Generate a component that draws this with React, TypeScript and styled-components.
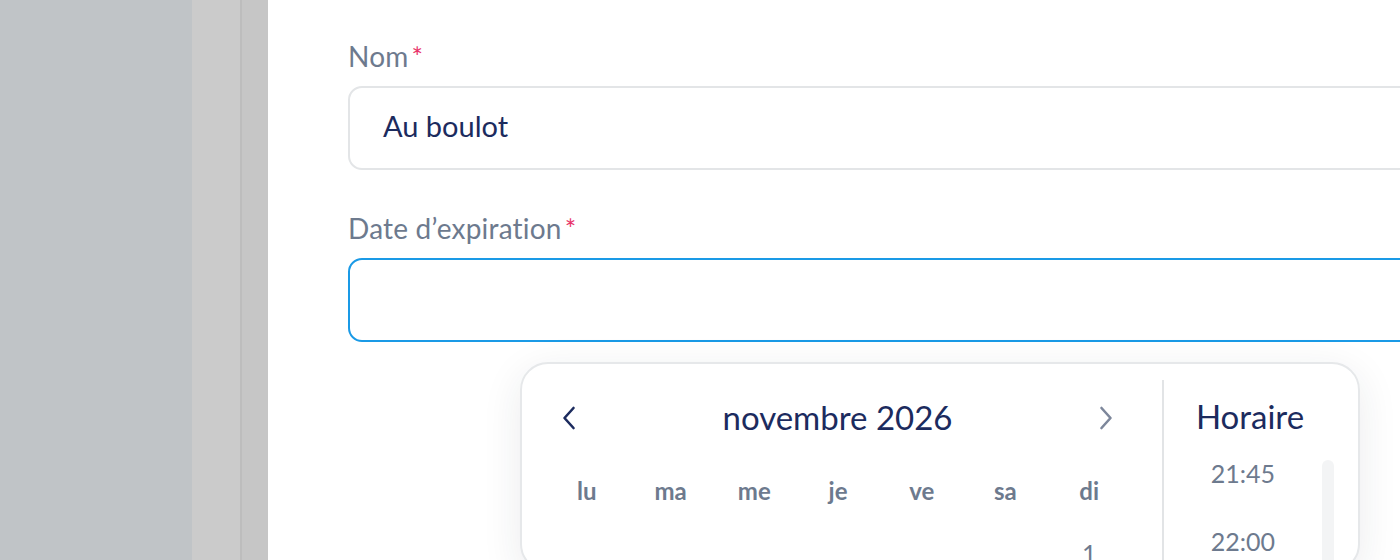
import React from "react";
import styled, { createGlobalStyle } from "styled-components";

const GlobalStyle = createGlobalStyle`
  html, body { margin: 0; padding: 0; background: #ffffff; }
  body { font-family: Lato, "Open Sans", "Liberation Sans", sans-serif; }
  * { box-sizing: border-box; }
`;

const Page = styled.div`
  display: flex;
  width: 1400px;
  height: 560px;
  overflow: hidden;
`;

const Sidebar = styled.div`
  flex: 0 0 192px;
  background: #c0c4c7;
`;

const Shade = styled.div`
  flex: 0 0 50px;
  background: #cbcbcb;
  border-right: 2px solid #bdbdbd;
`;

const Edge = styled.div`
  flex: 0 0 26px;
  background: #c6c6c6;
`;

const Main = styled.main`
  flex: 1;
  min-width: 0;
  background: #ffffff;
  padding: 38px 0 0 80px;
  display: flex;
  flex-direction: column;
`;

const Field = styled.div<{ $gap?: number }>`
  display: flex;
  flex-direction: column;
  margin-bottom: ${(p) => p.$gap ?? 0}px;
`;

const Label = styled.label`
  font-size: 28px;
  letter-spacing: 0.2px;
  color: #6d7a8e;
  line-height: 36px;
  height: 36px;
  margin-bottom: 12px;
  display: flex;
  align-items: flex-start;
`;

const Star = styled.span`
  color: #e8336a;
  font-size: 27px;
  line-height: 27px;
  margin: 5px 0 0 3px;
`;

const Input = styled.div<{ $focus?: boolean }>`
  width: 1200px;
  height: 84px;
  border: 2px solid ${(p) => (p.$focus ? "#1a9ae6" : "#e3e5e7")};
  border-radius: 14px;
  background: #ffffff;
  padding: 0 33px 5px;
  display: flex;
  align-items: center;
  font-size: 29px;
  color: #1c2b5e;
`;

const Popup = styled.div`
  margin: 20px 0 0 172px;
  width: 840px;
  height: 260px;
  border: 2px solid #e6e8ea;
  border-radius: 28px;
  background: #ffffff;
  box-shadow: 0 10px 40px rgba(30, 40, 60, 0.09);
  display: flex;
  padding: 16px 0 0 23px;
`;

const Calendar = styled.div`
  width: 586px;
  display: flex;
  flex-direction: column;
`;

const Header = styled.div`
  display: flex;
  align-items: center;
  justify-content: space-between;
  padding: 0 18px 0 17px;
  height: 44px;
  margin-top: 16px;
`;

const Title = styled.div`
  font-size: 33px;
  color: #1c2b5e;
  line-height: 44px;
  margin-top: -2px;
`;

const NavButton = styled.button`
  border: none;
  background: none;
  padding: 0;
  width: 14px;
  height: 24px;
  display: flex;
  align-items: center;
  justify-content: center;
  cursor: pointer;
`;

const DayGrid = styled.div`
  display: grid;
  grid-template-columns: repeat(7, 1fr);
  row-gap: 30px;
  margin-top: 36px;
`;

const DayName = styled.div`
  text-align: center;
  font-size: 24px;
  font-weight: 700;
  color: #6d7a8e;
  line-height: 30px;
`;

const DayCell = styled.div`
  text-align: center;
  font-size: 25px;
  color: #6d7a8e;
  line-height: 34px;
`;

const TimePane = styled.div`
  margin-left: 31px;
  border-left: 2px solid #e2e4e6;
  flex: 1;
  display: flex;
  flex-direction: column;
  position: relative;
`;

const TimeTitle = styled.div`
  text-align: center;
  font-size: 33px;
  color: #1c2b5e;
  line-height: 44px;
  margin-top: 14px;
  padding-right: 22px;
`;

const TimeList = styled.div`
  display: flex;
  flex-direction: column;
  padding-right: 36px;
  margin-top: 18px;
  gap: 34px;
`;

const TimeItem = styled.div`
  text-align: center;
  font-size: 25px;
  color: #6d7a8e;
  line-height: 34px;
`;

const ScrollTrack = styled.div`
  position: absolute;
  top: 80px;
  right: 24px;
  width: 12px;
  height: 200px;
  border-radius: 6px;
  background: #f3f4f5;
`;

const Chevron = ({ dir, color }: { dir: "left" | "right"; color: string }) => (
  <svg width="14" height="24" viewBox="0 0 14 24" fill="none">
    <path
      d={dir === "left" ? "M11.5 2 L2.5 12 L11.5 22" : "M2.5 2 L11.5 12 L2.5 22"}
      stroke={color}
      strokeWidth="2.6"
      strokeLinecap="round"
      strokeLinejoin="round"
    />
  </svg>
);

const days = ["lu", "ma", "me", "je", "ve", "sa", "di"];

export default function App() {
  return (
    <>
      <GlobalStyle />
      <Page>
        <Sidebar />
        <Shade />
        <Edge />
        <Main>
          <Field $gap={40}>
            <Label>
              Nom<Star>*</Star>
            </Label>
            <Input>Au boulot</Input>
          </Field>
          <Field>
            <Label>
              Date d’expiration<Star>*</Star>
            </Label>
            <Input $focus />
          </Field>
          <Popup>
            <Calendar>
              <Header>
                <NavButton aria-label="Mois précédent">
                  <Chevron dir="left" color="#1c2b5e" />
                </NavButton>
                <Title>novembre 2026</Title>
                <NavButton aria-label="Mois suivant">
                  <Chevron dir="right" color="#7d879b" />
                </NavButton>
              </Header>
              <DayGrid>
                {days.map((d) => (
                  <DayName key={d}>{d}</DayName>
                ))}
                {[0, 1, 2, 3, 4, 5].map((i) => (
                  <DayCell key={i} />
                ))}
                <DayCell>1</DayCell>
              </DayGrid>
            </Calendar>
            <TimePane>
              <TimeTitle>Horaire</TimeTitle>
              <TimeList>
                <TimeItem>21:45</TimeItem>
                <TimeItem>22:00</TimeItem>
              </TimeList>
              <ScrollTrack />
            </TimePane>
          </Popup>
        </Main>
      </Page>
    </>
  );
}
